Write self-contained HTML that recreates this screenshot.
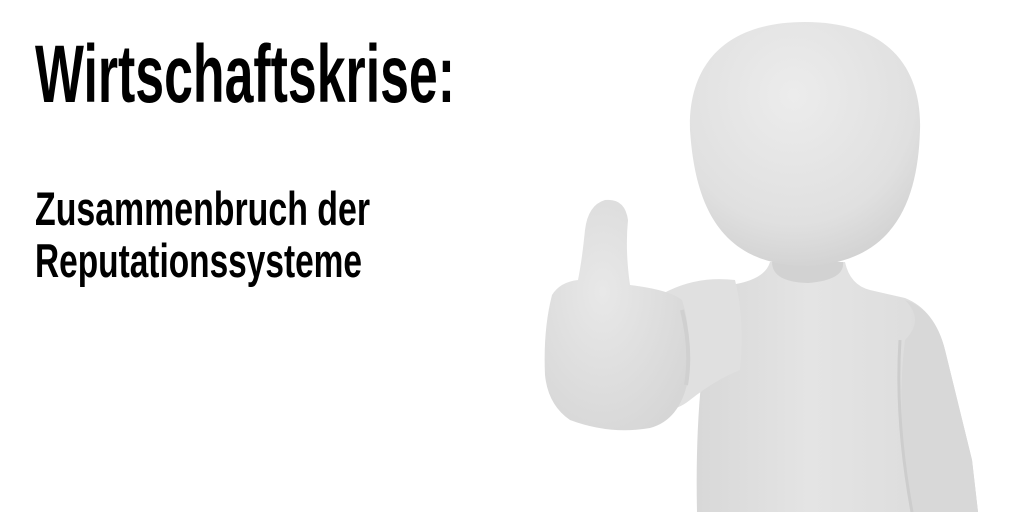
<!DOCTYPE html>
<html><head><meta charset="utf-8"><style>
html,body{margin:0;padding:0;background:#fff;width:1024px;height:512px;overflow:hidden}
svg{position:absolute;left:0;top:0}
</style></head><body>
<svg width="1024" height="512" viewBox="0 0 1024 512" xmlns="http://www.w3.org/2000/svg">
<defs>
<radialGradient id="hg" cx="0.45" cy="0.3" r="0.75">
<stop offset="0" stop-color="#ececec"/><stop offset="0.7" stop-color="#e0e0e0"/><stop offset="1" stop-color="#d0d0d0"/>
</radialGradient>
<linearGradient id="bg" x1="0" y1="0" x2="1" y2="0">
<stop offset="0" stop-color="#d8d8d8"/><stop offset="0.4" stop-color="#e4e4e4"/><stop offset="0.75" stop-color="#dedede"/><stop offset="1" stop-color="#d2d2d2"/>
</linearGradient>
<radialGradient id="hand" cx="0.4" cy="0.4" r="0.7">
<stop offset="0" stop-color="#e8e8e8"/><stop offset="1" stop-color="#d6d6d6"/>
</radialGradient>
</defs>
<path d="M770 262 L845 262 Q850 285 870 290 L905 298 Q935 310 945 350 L972 460 L978 512 L697 512 Q695 420 705 350 Q700 300 730 285 Q765 280 770 262 Z" fill="url(#bg)"/>
<path d="M905 300 Q925 320 905 340 Q895 420 912 512 L978 512 L972 460 L945 350 Q935 310 905 300 Z" fill="#d8d8d8"/>
<path d="M900 340 Q895 420 912 512" stroke="#cdcdcd" stroke-width="3" fill="none"/>
<path d="M772 262 L843 262 Q845 280 808 283 Q772 282 772 262 Z" fill="#d2d2d2"/>
<path d="M735 280 Q700 276 670 290 Q650 300 640 300 L640 400 Q665 420 690 400 Q715 380 740 370 Q745 320 735 280 Z" fill="#e0e0e0"/>
<path d="M578 280 Q560 282 552 295 Q543 330 545 375 Q548 405 570 420 Q610 435 650 428 Q680 420 688 380 Q692 330 682 300 Q670 290 630 285 Q625 250 628 220 Q625 198 605 200 Q588 205 585 230 Q582 260 578 280 Z" fill="url(#hand)"/>
<path d="M682 310 Q692 350 686 385" stroke="#d0d0d0" stroke-width="4" fill="none"/>
<path d="M805 22 C890 22 922 70 920 130 C918 200 895 262 808 266 C720 266 695 205 690 130 C688 70 720 22 805 22 Z" fill="url(#hg)"/>
<text x="35" y="102" font-family="Liberation Sans, sans-serif" font-weight="bold" font-size="82" textLength="420" lengthAdjust="spacingAndGlyphs" fill="#000">Wirtschaftskrise:</text>
<text x="35" y="225" font-family="Liberation Sans, sans-serif" font-weight="bold" font-size="47" textLength="335" lengthAdjust="spacingAndGlyphs" fill="#000">Zusammenbruch der</text>
<text x="35" y="277" font-family="Liberation Sans, sans-serif" font-weight="bold" font-size="47" textLength="327" lengthAdjust="spacingAndGlyphs" fill="#000">Reputationssysteme</text>
</svg>
</body></html>
